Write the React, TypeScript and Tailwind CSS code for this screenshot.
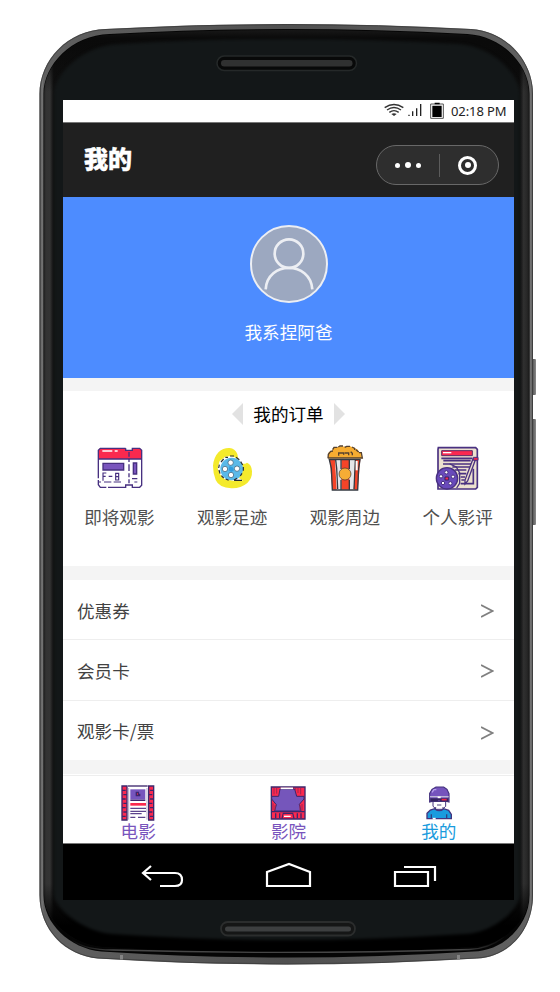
import React from "react";

const outline = (l: number, t: number, r: number, b: number) =>
  `M${l} 94 C${l} ${t + 36} ${l + 28} ${t + 6} ${l + 66} ${t + 5} Q286 ${t - 5} ${r - 62} ${t + 5} C${r - 27} ${t + 7} ${r} ${t + 36} ${r} 94 V895 C${r} ${b - 32} ${r - 26} ${b - 7} ${r - 56} ${b - 6} Q286 ${b + 6} ${l + 58} ${b - 6} C${l + 26} ${b - 9} ${l} ${b - 34} ${l} 895 Z`;

function PhoneBody() {
  return (
    <svg className="absolute inset-0" width="560" height="992" viewBox="0 0 560 992" fill="none">
      <defs>
        <linearGradient id="side" x1="40" x2="533" y1="0" y2="0" gradientUnits="userSpaceOnUse">
          <stop offset="0" stopColor="#4a4a4a" />
          <stop offset=".004" stopColor="#777" />
          <stop offset=".008" stopColor="#606060" />
          <stop offset=".5" stopColor="#505050" />
          <stop offset=".992" stopColor="#606060" />
          <stop offset=".996" stopColor="#777" />
          <stop offset="1" stopColor="#444" />
        </linearGradient>
        <linearGradient id="bezel" x1="43" x2="530" y1="0" y2="0" gradientUnits="userSpaceOnUse">
          <stop offset="0" stopColor="#171717" />
          <stop offset=".006" stopColor="#333" />
          <stop offset=".014" stopColor="#343434" />
          <stop offset=".022" stopColor="#101010" />
          <stop offset=".5" stopColor="#0a0a0a" />
          <stop offset=".978" stopColor="#0d0d0d" />
          <stop offset=".987" stopColor="#303030" />
          <stop offset=".994" stopColor="#272727" />
          <stop offset="1" stopColor="#151515" />
        </linearGradient>
        <linearGradient id="shade" x1="0" x2="0" y1="27" y2="958" gradientUnits="userSpaceOnUse">
          <stop offset="0" stopColor="#1c1c1c" />
          <stop offset=".012" stopColor="#0a0a0a" />
          <stop offset=".07" stopColor="#080808" stopOpacity="0" />
          <stop offset=".92" stopColor="#000" stopOpacity="0" />
          <stop offset=".965" stopColor="#000" />
        </linearGradient>
        <linearGradient id="rim" x1="70" x2="506" y1="0" y2="0" gradientUnits="userSpaceOnUse">
          <stop offset="0" stopColor="#464646" stopOpacity="0" />
          <stop offset=".1" stopColor="#464646" />
          <stop offset=".9" stopColor="#464646" />
          <stop offset="1" stopColor="#464646" stopOpacity="0" />
        </linearGradient>
        <linearGradient id="button" x1="532" x2="536" y1="0" y2="0" gradientUnits="userSpaceOnUse">
          <stop stopColor="#4b4b4b" />
          <stop offset="1" stopColor="#8a8a8a" />
        </linearGradient>
        <filter id="soft" x="-5%" y="-5%" width="110%" height="110%" colorInterpolationFilters="sRGB">
          <feGaussianBlur stdDeviation="1.8" />
        </filter>
      </defs>
      <rect x="531" y="359" width="5" height="36" rx="1" fill="url(#button)" />
      <rect x="531" y="419" width="5" height="106" rx="1" fill="url(#button)" />
      <path d={outline(39.5, 24, 533, 964.5)} fill="url(#side)" />
      <path d={outline(40, 24.5, 532.5, 964)} stroke="#3b3b3b" strokeWidth=".8" />
      <path d={outline(43.5, 29, 529.5, 957.5)} fill="#050505" />
      <path d={outline(44, 30, 529, 953)} fill="url(#bezel)" />
      <path d={outline(44, 30, 529, 953)} fill="url(#shade)" />
      <path d="M72 940 C83 948 96 949.500 112 950 Q286 955 469 949.500 C484 949 495 944 504 937" stroke="url(#rim)" strokeWidth="1.300" />
      <path d={outline(54, 39, 520, 940)} fill="#131718" filter="url(#soft)" />
      <path d="M121.500 955v4.500M458.500 955v4.500" stroke="#858585" strokeWidth="3" />
      <rect x="217" y="56" width="139.500" height="14.500" rx="7.250" fill="#080909" stroke="#252929" strokeWidth="1.500" />
      <rect x="221" y="60" width="131.500" height="6.500" rx="3.250" fill="#303131" />
      <rect x="221" y="922" width="134" height="13.500" rx="6.750" fill="#151616" stroke="#2b2d2d" strokeWidth="1.800" />
      <rect x="225" y="926.500" width="126" height="5" rx="2.500" fill="#3d3f40" />
    </svg>
  );
}

function StatusIcons() {
  return (
    <svg width="62" height="18" viewBox="278 264 186 54" fill="none">
      <path d="M283 281q28-19 56 0M290 288q21-15 42 0M297 295q14-10 28 0" stroke="#333" strokeWidth="4" />
      <path d="M303 300q8-5 16 0l-8 6z" fill="#333" />
      <path d="M356 306v-4M367 306v-14M379 306v-23M391 306v-36" stroke="#222" strokeWidth="4" />
      <path d="M421 270h38v43h-38z" fill="#fff" stroke="#555" strokeWidth="3" />
      <path d="M426 275h28v34h-28zM433 266h15v5h-15z" fill="#000" />
    </svg>
  );
}

function Avatar() {
  return (
    <svg width="80" height="80" viewBox="56 41 240 240" fill="none" stroke="#eceef3" strokeWidth="8">
      <circle cx="176" cy="161" r="114" fill="#9ca8c0" strokeWidth="6" />
      <circle cx="176" cy="130" r="43" />
      <path d="M106 237C111 151 240 151 246 237" />
    </svg>
  );
}

function TicketIcon() {
  return (
    <svg className="ml-[2px]" width="46" height="42" viewBox="51 50 138 126" fill="none">
      <path d="M60 54h77q0 8 10 8t10-8h22l6 6v105l-6 6h-20q0-9-11-9t-11 9H61l-6-6V60z" fill="#fff" />
      <path d="M60 54h77q0 8 10 8t10-8h22l6 6v26H55V60z" fill="#fa294f" />
      <path d="M137 54H61l-6 6v84M55 149v14l6 8h18M84 171h53v-7h20v7h22l6-6V60l-6-6h-22v6h-20v-6M55 86h130" stroke="#473080" strokeWidth="4" />
      <path d="M67 62h30M104 62h9" stroke="#fff" strokeWidth="4" />
      <path d="M69 99h62v20H69zM160 98h10v33h-10z" fill="#7955bd" stroke="#473080" strokeWidth="4" />
      <path d="M147 65v14M147 85v10M147 102v20M147 129v12M147 147v12" stroke="#473080" strokeWidth="4" />
      <path d="M69 151v-23h10M69 138h8M86 138h11M107 129h9v20h-9zM107 139h9M55 155h8M72 155h22M101 155h22M156 145h16M163 155h9" stroke="#473080" strokeWidth="3.500" />
    </svg>
  );
}

function ReelIcon() {
  return (
    <svg width="41" height="42" viewBox="51 153 123 126" fill="none">
      <path d="M54 209Q56 184 71 168Q85 155 104 156Q120 158 127 174L132 200Q147 207 156 200Q170 205 171 226Q172 247 157 261Q137 278 109 277Q72 275 62 252Q54 232 54 209Z" fill="#f4ea2c" />
      <path d="M74 195L91 182l15-2l12 3l15 10l9 15v18l-10 20l12 8h-30l-25-4l-14-15l-7-18z" fill="#fff" />
      <circle cx="110" cy="219" r="34" fill="#5ab9e8" />
      <path d="M78 198l8-9M91 184h8M105 180h12M123 184l10 7M137 197l6 10M145 213v11M141 232l-5 8M126 247l-9 5M73 206l-2 10M72 222l3 11M79 239l7 7M92 249l9 4M117 253h24" stroke="#282d34" strokeWidth="3.500" />
      <g fill="#fff" stroke="#2d536e" strokeWidth="2"><circle cx="107" cy="200" r="8" /><circle cx="90" cy="219" r="8" /><circle cx="126" cy="218" r="8" /><circle cx="108" cy="237" r="8" /></g>
      <path d="M103 211l10 3l4 9l-8 5l-8-5z" fill="#329ddd" />
    </svg>
  );
}

function PopcornIcon() {
  return (
    <svg width="38" height="46" viewBox="48 44 114 138" fill="none">
      <path d="M58 87h93l-5 91H67z" fill="#fff" />
      <path d="M59 87h16l5 91H67zM94 87h24v91H94zM137 87h14l-8 91h-12z" fill="#f54428" />
      <path d="M77 91h13l2 84h-8zM120 91h14l-5 84h-9z" fill="#e6e6e9" />
      <path d="M58 88h92l-4 26l-3 65H67l-3-65zM77 89l3 25l3 62M93 88v28M93 148v30M118 88v28M118 148v30M136 89l-4 87" stroke="#353a42" strokeWidth="4" />
      <circle cx="105" cy="131" r="18" fill="#f5ac35" stroke="#3b3436" strokeWidth="2" />
      <path d="M54 84l2-18l10-4l3-9l13-3l15-2l13 2l11-2l12 6l9 3l5 8l7 3l2 16z" fill="#f6ac31" />
      <path d="M54 84l1-12l7-9l7-1M68 58l4-7h10M85 50l5-3h9M104 51l6-3h10M126 50l8 4v5M138 58l8 7M147 67h7l3 16H54M86 76v-8h15v5M104 68h12v7M122 64l5 5v6" stroke="#55412e" strokeWidth="4" />
      <path d="M140 92v28" stroke="#fff" strokeWidth="6" />
    </svg>
  );
}

function ReviewIcon() {
  return (
    <svg className="mr-[2px]" width="44" height="44" viewBox="60 45 132 132" fill="none">
      <path d="M70 50h112l5 5v114l-5 5H69V55z" fill="#ece1cf" stroke="#493181" strokeWidth="5" />
      <path d="M80 59h92v15H80z" fill="#fa2951" stroke="#5b2b65" strokeWidth="3" />
      <path d="M84 65h25" stroke="#fff" strokeWidth="4" />
      <path d="M79 82h93M85 89h82M104 99h66M112 108h54M119 117h35M130 128h24M137 138h13M139 147h10M137 158h38v-45" stroke="#493181" strokeWidth="5" />
      <path d="M184 79l-26 71l-8 9v-12l25-66" fill="#e9ddcb" stroke="#493181" strokeWidth="4" />
      <path d="M175 79h14v9h-14z" fill="#ed244d" stroke="#493181" strokeWidth="3" />
      <path d="M84 99h20l20 9l10 18v31l-9 14" stroke="#493181" strokeWidth="4" />
      <circle cx="96" cy="142" r="32" fill="#694abb" stroke="#493181" strokeWidth="4" />
      <g fill="#fff" stroke="#493181" strokeWidth="3"><circle cx="94" cy="124" r="5" /><circle cx="78" cy="136" r="5" /><circle cx="84" cy="156" r="5" /><circle cx="106" cy="157" r="5" /><circle cx="114" cy="137" r="5" /></g>
      <path d="M90 138h11v9H90z" fill="#ef2854" stroke="#392361" strokeWidth="3" />
    </svg>
  );
}

function MovieIcon() {
  return (
    <svg width="34" height="36" viewBox="185 92 102 108" fill="none">
      <path d="M188 95h15v102h-15zM268 95h15v102h-15z" fill="#fb294f" stroke="#3d276c" strokeWidth="4" />
      <path d="M188 108h11M192 121h11M188 134h11M192 147h11M188 160h11M192 173h11M188 186h11M272 108h11M268 121h11M272 134h11M268 147h11M272 160h11M268 173h11M272 186h11" stroke="#3d276c" strokeWidth="4" />
      <path d="M206 95h59" stroke="#3d276c" strokeWidth="4" />
      <path d="M208 101v95M263 101v95" stroke="#8e80b1" strokeWidth="2" />
      <path d="M213 105h45v31h-45z" fill="#7655bd" />
      <path d="M213 138h45" stroke="#3d276c" strokeWidth="4" />
      <path d="M231 114v10h10v-4h-4v-6z" fill="#fa294f" stroke="#3d276c" strokeWidth="4" />
      <path d="M213 150h47" stroke="#fa294f" strokeWidth="8" />
      <path d="M213 162h47M213 171h47M213 178h34M213 189h15M236 189h22" stroke="#5b438d" strokeWidth="3.500" />
    </svg>
  );
}

function TheaterIcon() {
  return (
    <svg width="36" height="34" viewBox="631 95 108 102" fill="none">
      <path d="M635 98h101v96H635z" fill="#fb294f" stroke="#3d276c" strokeWidth="4" />
      <path d="M661 104h44l6 22h22v8l-14 16l5 20h-79l5-19l-14-17v-8h21z" fill="#7556bb" stroke="#3d276c" strokeWidth="3" />
      <path d="M663 102h37" stroke="#fff" strokeWidth="5" />
      <path d="M643 101v19M651 101v17M708 101v8M715 101v15M723 101v19M640 147v21M646 153v15M727 149v19M721 153v15" stroke="#a22553" strokeWidth="3" />
      <path d="M636 172h99M648 177v15M660 177v15M713 177v15M724 177v15M667 193l4-16h28l4 16" stroke="#3d276c" strokeWidth="4" />
      <path d="M671 180h27v11h-27z" fill="#fb294f" />
      <path d="M673 186h20" stroke="#fff" strokeWidth="4" />
    </svg>
  );
}

function PersonIcon() {
  return (
    <svg width="26" height="34" viewBox="136 92 78 102" fill="none">
      <path d="M157 135h38v18l-10 9h-18l-10-9z" fill="#fff" stroke="#44327d" strokeWidth="3" />
      <path d="M147 140v-26l7-12l12-7h23l10 7l6 13v25l-6-2H154z" fill="#7554bd" stroke="#44327d" strokeWidth="3.500" />
      <path d="M154 111l6-8h7" stroke="#b8a1ed" strokeWidth="4" />
      <path d="M148 124h56" stroke="#bdb8d4" strokeWidth="4" />
      <path d="M149 129h54v9h-23l-5-4l-5 4h-21z" fill="#35245f" />
      <path d="M183 133h15" stroke="#ed244d" strokeWidth="5" />
      <path d="M160 143h32v10h-32z" fill="#fff" />
      <path d="M171 126h9" stroke="#fff" strokeWidth="5" />
      <path d="M169 149h13M165 155v5M187 155v5" stroke="#51447c" strokeWidth="3" />
      <path d="M139 190v-16l10-10l13-4q14 12 27 0l15 5l8 12v13z" fill="#199bde" stroke="#44327d" strokeWidth="4" />
      <path d="M152 177v12M198 177v12" stroke="#314181" strokeWidth="4" />
      <path d="M156 190h9" stroke="#fff" strokeWidth="5" />
    </svg>
  );
}

const orders = [
  { label: "即将观影", icon: <TicketIcon /> },
  { label: "观影足迹", icon: <ReelIcon /> },
  { label: "观影周边", icon: <PopcornIcon /> },
  { label: "个人影评", icon: <ReviewIcon /> },
];

const menu = ["优惠券", "会员卡", "观影卡/票"];

const tabs = [
  { label: "电影", icon: <MovieIcon />, color: "text-[#7955bd]" },
  { label: "影院", icon: <TheaterIcon />, color: "text-[#7955bd]" },
  { label: "我的", icon: <PersonIcon />, color: "text-[#199bdd]" },
];

export default function App() {
  return (
    <div className="relative h-[992px] w-[560px] overflow-hidden bg-white font-['Noto_Sans_CJK_SC',sans-serif] text-[17.6px] leading-6">
      <PhoneBody />
      <main className="relative mt-[100px] ml-[63px] flex h-[800px] w-[451px] flex-col bg-white">
        <div className="flex h-[22px] shrink-0 items-center justify-end pr-[7px]">
          <StatusIcons />
          <span className="ml-[6px] w-[56px] whitespace-nowrap font-['Noto_Sans',sans-serif] text-[13px] tracking-[-0.1px] text-[#222]">02:18 PM</span>
        </div>
        <header className="flex h-[75px] shrink-0 items-start justify-between border-t border-[#777] bg-[#202020] pr-[15px] pl-[21px]">
          <h1 className="mt-[21px] text-[24px] leading-7 font-black text-white [-webkit-text-stroke:0.5px_white]">我的</h1>
          <div className="mt-[22px] flex h-10 w-[123px] items-center rounded-full border border-[#686868] bg-[#2e2e2e]">
            <div className="flex w-[62px] items-center justify-center gap-[5px]">
              <i className="size-[5px] rounded-full bg-white" />
              <i className="size-[6px] rounded-full bg-white" />
              <i className="size-[5px] rounded-full bg-white" />
            </div>
            <div className="h-[23px] w-px bg-[#5c5c5c]" />
            <div className="flex flex-1 justify-center pr-[3px]">
              <div className="flex size-[19px] items-center justify-center rounded-full border-[3px] border-white">
                <i className="size-[6px] rounded-full bg-white" />
              </div>
            </div>
          </div>
        </header>
        <section className="flex h-[181px] shrink-0 flex-col items-center bg-[#4d8cff] pt-[27px] text-white">
          <Avatar />
          <p className="mt-[16px]">我系捏阿爸</p>
        </section>
        <section className="h-[188px] shrink-0 border-t-[13px] border-[#f4f4f4] pt-[11px]">
          <h2 className="flex items-center justify-center gap-[10px] text-black">
            <svg width="11" height="22" viewBox="0 0 11 22"><path d="M11 0v22L0 11z" fill="#e2e2e2" /></svg>
            我的订单
            <svg width="11" height="22" viewBox="0 0 11 22"><path d="M0 0v22l11-11z" fill="#e2e2e2" /></svg>
          </h2>
          <div className="mt-[18px] grid grid-cols-4 text-[#505050]">
            {orders.map(({ label, icon }) => (
              <div key={label} className="flex flex-col items-center">
                <div className="flex h-[48px] items-center justify-center">{icon}</div>
                <span className="mt-[13px]">{label}</span>
              </div>
            ))}
          </div>
        </section>
        <section className="flex h-[194px] shrink-0 flex-col border-t-[14px] border-[#f4f4f4]">
          {menu.map((label) => (
            <div key={label} className="group flex flex-1 items-center justify-between border-b border-[#eeeeee] pt-[2px] pr-[20px] pl-[14px] text-[#424242] last:border-b-0">
              <span>{label}</span>
              <svg className="group-last:mt-[3px]" width="13" height="14" viewBox="0 0 13 14" fill="none"><path d="M0 1l11.500 6L0 13" stroke="#808080" strokeWidth="1.900" /></svg>
            </div>
          ))}
        </section>
        <div className="h-[14px] shrink-0 bg-[#f4f4f4]" />
        <nav className="mt-px grid h-[68px] shrink-0 grid-cols-3 border-t border-[#eee] pt-[9px]">
          {tabs.map(({ label, icon, color }) => (
            <div key={label} className="flex flex-col items-center">
              <div className="flex h-[36px] items-center">{icon}</div>
              <span className={`-mt-[2px] ${color}`}>{label}</span>
            </div>
          ))}
        </nav>
        <footer className="flex flex-1 items-start border-t border-[#777] bg-black">
          <svg className="mt-[18px] ml-[77px]" width="46" height="28" viewBox="0 0 46 28" fill="none" stroke="#fff" strokeWidth="2.200">
            <path d="M11 4L3 11l8 7M3 11h32q7 0 7 7q0 6-7 6H20" />
          </svg>
          <svg className="mt-[18px] ml-[79px]" width="48" height="28" viewBox="0 0 48 28" fill="none" stroke="#fff" strokeWidth="2.200">
            <path d="M2 10l22-8l21 8v14H2z" />
          </svg>
          <svg className="mt-[18px] ml-[79px]" width="46" height="28" viewBox="0 0 46 28" fill="none" stroke="#fff" strokeWidth="2.200">
            <path d="M3 10h33v14H3zM12 5h31v14" />
          </svg>
        </footer>
      </main>
    </div>
  );
}
